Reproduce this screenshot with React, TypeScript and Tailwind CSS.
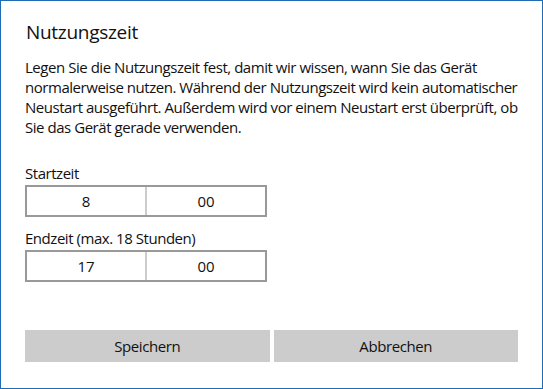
import React from "react";

function TimeBox({ h, m }: { h: string; m: string }) {
  return (
    <div className="mt-[2px] flex h-[32px] w-[242px] border-2 border-[#999999] bg-white">
      <div className="flex flex-1 items-center justify-center border-r-2 border-[#cccccc] text-[15px] text-[#111111]">
        {h}
      </div>
      <div className="flex flex-1 items-center justify-center text-[15px] text-[#111111]">
        {m}
      </div>
    </div>
  );
}

export default function App() {
  return (
    <div
      className="flex h-[389px] w-[543px] flex-col overflow-hidden border border-[#1e6bb8] bg-white px-6 text-[#111111]"
      style={{ fontFamily: '"Open Sans", "Noto Sans", sans-serif' }}
    >
      <h1 className="mt-[17px] pl-px text-[19px] leading-[28px] font-normal tracking-[-0.3px]">Nutzungszeit</h1>
      <p className="mt-[11px] whitespace-nowrap text-[15px] leading-[20px] tracking-[-0.46px]">
        Legen Sie die Nutzungszeit fest, damit wir wissen, wann Sie das Gerät
        <br />
        normalerweise nutzen. Während der Nutzungszeit wird kein automatischer
        <br />
        Neustart ausgeführt. Außerdem wird vor einem Neustart erst überprüft, ob
        <br />
        Sie das Gerät gerade verwenden.
      </p>
      <div className="mt-[26px] text-[15px] leading-[20px] tracking-[-0.46px]">Startzeit</div>
      <TimeBox h="8" m="00" />
      <div className="mt-[11px] text-[15px] leading-[20px] tracking-[-0.46px]">Endzeit (max. 18 Stunden)</div>
      <TimeBox h="17" m="00" />
      <div className="mt-[48px] flex gap-[4px]">
        <button className="flex h-[32px] flex-1 items-center justify-center bg-[#cccccc] text-[15px] tracking-[-0.4px] text-[#111111]">
          Speichern
        </button>
        <button className="flex h-[32px] flex-1 items-center justify-center bg-[#cccccc] text-[15px] tracking-[-0.4px] text-[#111111]">
          Abbrechen
        </button>
      </div>
    </div>
  );
}
